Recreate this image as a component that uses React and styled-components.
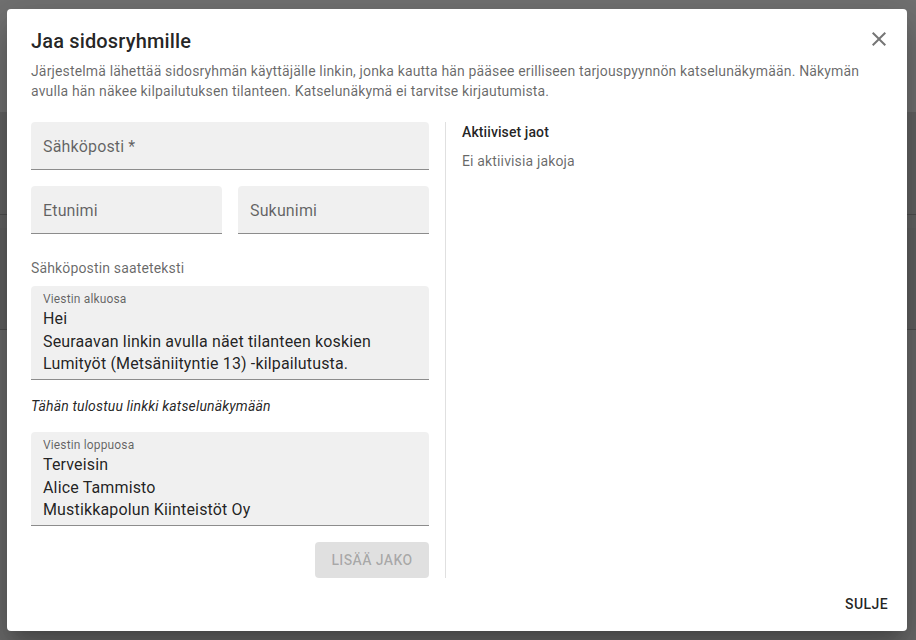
import React from "react";
import styled, { createGlobalStyle } from "styled-components";

const GlobalStyle = createGlobalStyle`
  html, body {
    margin: 0;
    padding: 0;
    font-family: Roboto, "Liberation Sans", Arial, sans-serif;
    -webkit-font-smoothing: antialiased;
  }
  * { box-sizing: border-box; }
`;

const Backdrop = styled.div`
  width: 916px;
  height: 640px;
  overflow: hidden;
  background: linear-gradient(
    to bottom,
    #727272 0px,
    #727272 112px,
    #646464 112px,
    #646464 214px,
    #4f4f4f 214px,
    #4f4f4f 215px,
    #646464 215px,
    #646464 228px,
    #616161 228px,
    #616161 329px,
    #4f4f4f 329px,
    #4f4f4f 330px,
    #6a6a6a 330px
  );
  padding: 9px 9px 9px 7px;
  display: flex;
`;

const Dialog = styled.div`
  width: 900px;
  height: 622px;
  background: #ffffff;
  border-radius: 4px;
  box-shadow: 0 11px 15px -7px rgba(0, 0, 0, 0.2),
    0 24px 38px 3px rgba(0, 0, 0, 0.14), 0 9px 46px 8px rgba(0, 0, 0, 0.12);
  display: flex;
  flex-direction: column;
  color: rgba(0, 0, 0, 0.87);
`;

const TitleRow = styled.div`
  display: flex;
  align-items: center;
  justify-content: space-between;
  padding: 16px 12px 0 24px;
  height: 48px;
`;

const Title = styled.h2`
  margin: 0;
  font-size: 20px;
  font-weight: 500;
  line-height: 32px;
  letter-spacing: 0.15px;
`;

const CloseButton = styled.button`
  border: none;
  background: none;
  padding: 4px;
  width: 32px;
  height: 32px;
  display: flex;
  align-items: center;
  justify-content: center;
  color: rgba(0, 0, 0, 0.54);
  cursor: pointer;
  margin-top: -4px;
`;

const Content = styled.div`
  padding: 4px 24px 0 24px;
  flex: 1;
`;

const Description = styled.p`
  margin: 0 0 21px 0;
  font-size: 14px;
  line-height: 20px;
  color: rgba(0, 0, 0, 0.6);
  letter-spacing: 0.15px;
`;

const Columns = styled.div`
  display: flex;
  align-items: stretch;
`;

const LeftColumn = styled.div`
  width: 398px;
  display: flex;
  flex-direction: column;
`;

const Divider = styled.div`
  width: 1px;
  background: rgba(0, 0, 0, 0.12);
  margin: 0 16px;
`;

const RightColumn = styled.div`
  flex: 1;
`;

const Row = styled.div`
  display: flex;
  gap: 16px;
  margin-top: ${(p) => p.$mt || 0}px;
`;

const Field = styled.div`
  background: rgba(0, 0, 0, 0.06);
  border-radius: 4px 4px 0 0;
  border-bottom: 1px solid rgba(0, 0, 0, 0.42);
  height: ${(p) => (p.$multi ? "94px" : "48px")};
  flex: ${(p) => (p.$multi ? "0 0 94px" : "1")};
  padding: ${(p) => (p.$multi ? "6px 12px 0 12px" : "0 12px")};
  display: flex;
  flex-direction: column;
  justify-content: ${(p) => (p.$multi ? "flex-start" : "center")};
`;

const Placeholder = styled.span`
  font-size: 16px;
  color: rgba(0, 0, 0, 0.6);
  letter-spacing: 0.15px;
  padding-top: 1px;
`;

const SmallLabel = styled.span`
  font-size: 12px;
  line-height: 14px;
  color: rgba(0, 0, 0, 0.6);
  letter-spacing: 0.15px;
`;

const FieldText = styled.div`
  font-size: 16px;
  line-height: 22.5px;
  letter-spacing: 0.15px;
  color: rgba(0, 0, 0, 0.87);
  margin-top: 2px;
`;

const SectionLabel = styled.div`
  font-size: 14px;
  line-height: 20px;
  color: rgba(0, 0, 0, 0.6);
  margin-top: 24px;
  margin-bottom: 8px;
  letter-spacing: 0.15px;
`;

const LinkNote = styled.div`
  font-size: 14px;
  font-style: italic;
  line-height: 20px;
  margin: 16px 0 16px 0;
  letter-spacing: 0.15px;
`;

const ButtonRow = styled.div`
  display: flex;
  justify-content: flex-end;
  margin-top: 16px;
`;

const ContainedButton = styled.button`
  height: 36px;
  padding: 0 16px;
  border: none;
  border-radius: 4px;
  background: rgba(0, 0, 0, 0.12);
  color: rgba(0, 0, 0, 0.26);
  font-family: inherit;
  font-size: 14px;
  font-weight: 500;
  letter-spacing: 0.4px;
  text-transform: uppercase;
  width: 114px;
`;

const SubHeading = styled.div`
  font-size: 14px;
  font-weight: 500;
  line-height: 20px;
  letter-spacing: 0.1px;
`;

const Muted = styled.div`
  font-size: 14px;
  line-height: 20px;
  color: rgba(0, 0, 0, 0.6);
  margin-top: 9px;
  letter-spacing: 0.15px;
`;

const Actions = styled.div`
  display: flex;
  justify-content: flex-end;
  padding: 8px 11px 9px 8px;
`;

const TextButton = styled.button`
  height: 36px;
  padding: 0 8px;
  border: none;
  background: none;
  color: rgba(0, 0, 0, 0.87);
  font-family: inherit;
  font-size: 14px;
  font-weight: 500;
  letter-spacing: 0.4px;
  text-transform: uppercase;
  cursor: pointer;
`;

const CloseIcon = () => (
  <svg width="24" height="24" viewBox="0 0 24 24" fill="currentColor">
    <path d="M19 6.41 17.59 5 12 10.59 6.41 5 5 6.41 10.59 12 5 17.59 6.41 19 12 13.41 17.59 19 19 17.59 13.41 12z" />
  </svg>
);

export default function App() {
  return (
    <>
      <GlobalStyle />
      <Backdrop>
        <Dialog>
          <TitleRow>
            <Title>Jaa sidosryhmille</Title>
            <CloseButton aria-label="close">
              <CloseIcon />
            </CloseButton>
          </TitleRow>
          <Content>
            <Description>
              Järjestelmä lähettää sidosryhmän käyttäjälle linkin, jonka kautta
              hän pääsee erilliseen tarjouspyynnön katselunäkymään. Näkymän
              avulla hän näkee kilpailutuksen tilanteen. Katselunäkymä ei
              tarvitse kirjautumista.
            </Description>
            <Columns>
              <LeftColumn>
                <Row>
                  <Field>
                    <Placeholder>Sähköposti *</Placeholder>
                  </Field>
                </Row>
                <Row $mt={16}>
                  <Field>
                    <Placeholder>Etunimi</Placeholder>
                  </Field>
                  <Field>
                    <Placeholder>Sukunimi</Placeholder>
                  </Field>
                </Row>
                <SectionLabel>Sähköpostin saateteksti</SectionLabel>
                <Field $multi>
                  <SmallLabel>Viestin alkuosa</SmallLabel>
                  <FieldText>
                    Hei
                    <br />
                    Seuraavan linkin avulla näet tilanteen koskien
                    <br />
                    Lumityöt (Metsäniityntie 13) -kilpailutusta.
                  </FieldText>
                </Field>
                <LinkNote>Tähän tulostuu linkki katselunäkymään</LinkNote>
                <Field $multi>
                  <SmallLabel>Viestin loppuosa</SmallLabel>
                  <FieldText>
                    Terveisin
                    <br />
                    Alice Tammisto
                    <br />
                    Mustikkapolun Kiinteistöt Oy
                  </FieldText>
                </Field>
                <ButtonRow>
                  <ContainedButton disabled>Lisää jako</ContainedButton>
                </ButtonRow>
              </LeftColumn>
              <Divider />
              <RightColumn>
                <SubHeading>Aktiiviset jaot</SubHeading>
                <Muted>Ei aktiivisia jakoja</Muted>
              </RightColumn>
            </Columns>
          </Content>
          <Actions>
            <TextButton>Sulje</TextButton>
          </Actions>
        </Dialog>
      </Backdrop>
    </>
  );
}
